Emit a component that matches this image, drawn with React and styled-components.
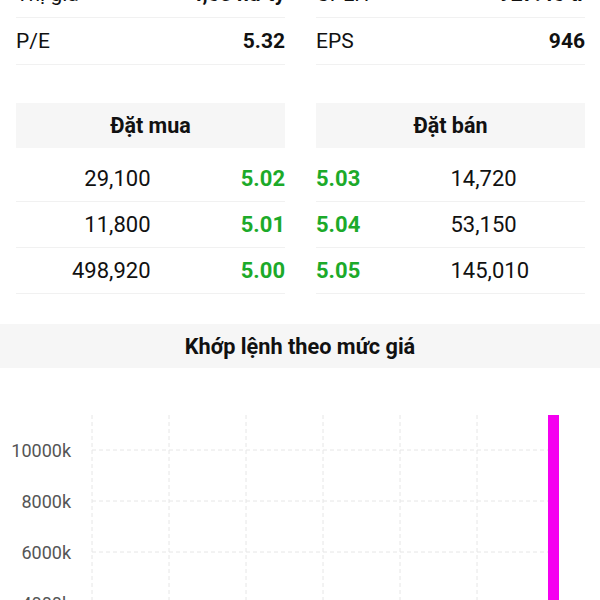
import styled, { createGlobalStyle } from "styled-components";

const GlobalStyle = createGlobalStyle`
	* {
		box-sizing: border-box;
	}
	body {
		margin: 0;
		background: #fff;
		font-family: Roboto, "Noto Sans", sans-serif;
		color: #111;
		overflow: hidden;
	}
`;

const Page = styled.div`
	width: 600px;
	height: 600px;
	overflow: hidden;
`;

/* the page is scrolled: first row sits partly above the window */
const Scroll = styled.div`
	margin-top: -29px;
`;

const Padded = styled.div`
	padding: 0 15px 0 16px;
`;

const InfoGrid = styled.div`
	display: grid;
	grid-template-columns: 1fr 1fr;
	column-gap: 31px;
`;

const InfoRow = styled.div`
	display: flex;
	align-items: center;
	justify-content: space-between;
	height: 47px;
	border-bottom: 1px solid #f1f1f1;
	font-size: 21px;
`;

const Label = styled.span`
	font-weight: 400;
`;

const Value = styled.span`
	font-weight: 700;
`;

const Book = styled.div`
	display: grid;
	grid-template-columns: 1fr 1fr;
	column-gap: 31px;
	margin-top: 38px;
`;

const SideHeader = styled.div`
	height: 45px;
	display: flex;
	align-items: center;
	justify-content: center;
	background: #f6f6f6;
	font-size: 21.5px;
	font-weight: 700;
	margin-bottom: 8px;
`;

const BookRow = styled.div`
	display: grid;
	grid-template-columns: 1fr 1fr;
	align-items: center;
	height: 46px;
	border-bottom: 1px solid #f1f1f1;
	font-size: 22px;
	text-align: ${(p) => (p.$side === "buy" ? "right" : "left")};
`;

const Qty = styled.span`
	font-weight: 400;
	color: #111;
`;

const Price = styled.span`
	font-weight: 700;
	color: #1caa2a;
`;

const ChartHeader = styled.div`
	margin-top: 30px;
	height: 44px;
	display: flex;
	align-items: center;
	justify-content: center;
	background: #f6f6f6;
	font-size: 21.7px;
	font-weight: 700;
`;

const ChartBox = styled.div`
	height: 300px;
`;

const info = [
	["Thị giá", "4,65 nđ tỷ", "CPLH", "927.46 tr"],
	["P/E", "5.32", "EPS", "946"],
];

const buys = [
	["29,100", "5.02"],
	["11,800", "5.01"],
	["498,920", "5.00"],
];

const sells = [
	["5.03", "14,720"],
	["5.04", "53,150"],
	["5.05", "145,010"],
];

const ticks = [10000, 8000, 6000, 4000, 2000, 0];

function PriceChart() {
	const top = 47;
	const zeroY = 337;
	const perK = 51 / 2000;
	const left = 92;
	const right = 554;
	const cols = [92, 169, 246, 323, 400, 477, 554];
	return (
		<svg width="600" height="300" viewBox="0 0 600 300">
			{cols.map((x) => (
				<line
					key={x}
					x1={x}
					x2={x}
					y1={top}
					y2={zeroY}
					stroke="#e6e6e6"
					strokeDasharray="4 3"
				/>
			))}
			{ticks.map((t) => {
				const y = zeroY - t * perK;
				return (
					<g key={t}>
						<line
							x1={left}
							x2={right}
							y1={y}
							y2={y}
							stroke="#e6e6e6"
							strokeDasharray="4 3"
						/>
						<text
							x="71"
							y={y}
							textAnchor="end"
							dominantBaseline="central"
							fontSize="18"
							fill="#555"
							fontFamily="Roboto, sans-serif"
						>
							{t}k
						</text>
					</g>
				);
			})}
			<rect x="548" y={top} width="11" height={zeroY - top} fill="#f500f0" />
		</svg>
	);
}

export default function App() {
	return (
		<Page>
			<GlobalStyle />
			<Scroll>
				<Padded>
					<InfoGrid>
						{info.map(([l1, v1, l2, v2]) => (
							<>
								<InfoRow key={l1}>
									<Label>{l1}</Label>
									<Value>{v1}</Value>
								</InfoRow>
								<InfoRow key={l2}>
									<Label>{l2}</Label>
									<Value>{v2}</Value>
								</InfoRow>
							</>
						))}
					</InfoGrid>
					<Book>
						<div>
							<SideHeader>Đặt mua</SideHeader>
							{buys.map(([q, p]) => (
								<BookRow key={p} $side="buy">
									<Qty>{q}</Qty>
									<Price>{p}</Price>
								</BookRow>
							))}
						</div>
						<div>
							<SideHeader>Đặt bán</SideHeader>
							{sells.map(([p, q]) => (
								<BookRow key={p} $side="sell">
									<Price>{p}</Price>
									<Qty>{q}</Qty>
								</BookRow>
							))}
						</div>
					</Book>
				</Padded>
				<ChartHeader>Khớp lệnh theo mức giá</ChartHeader>
				<ChartBox>
					<PriceChart />
				</ChartBox>
			</Scroll>
		</Page>
	);
}
